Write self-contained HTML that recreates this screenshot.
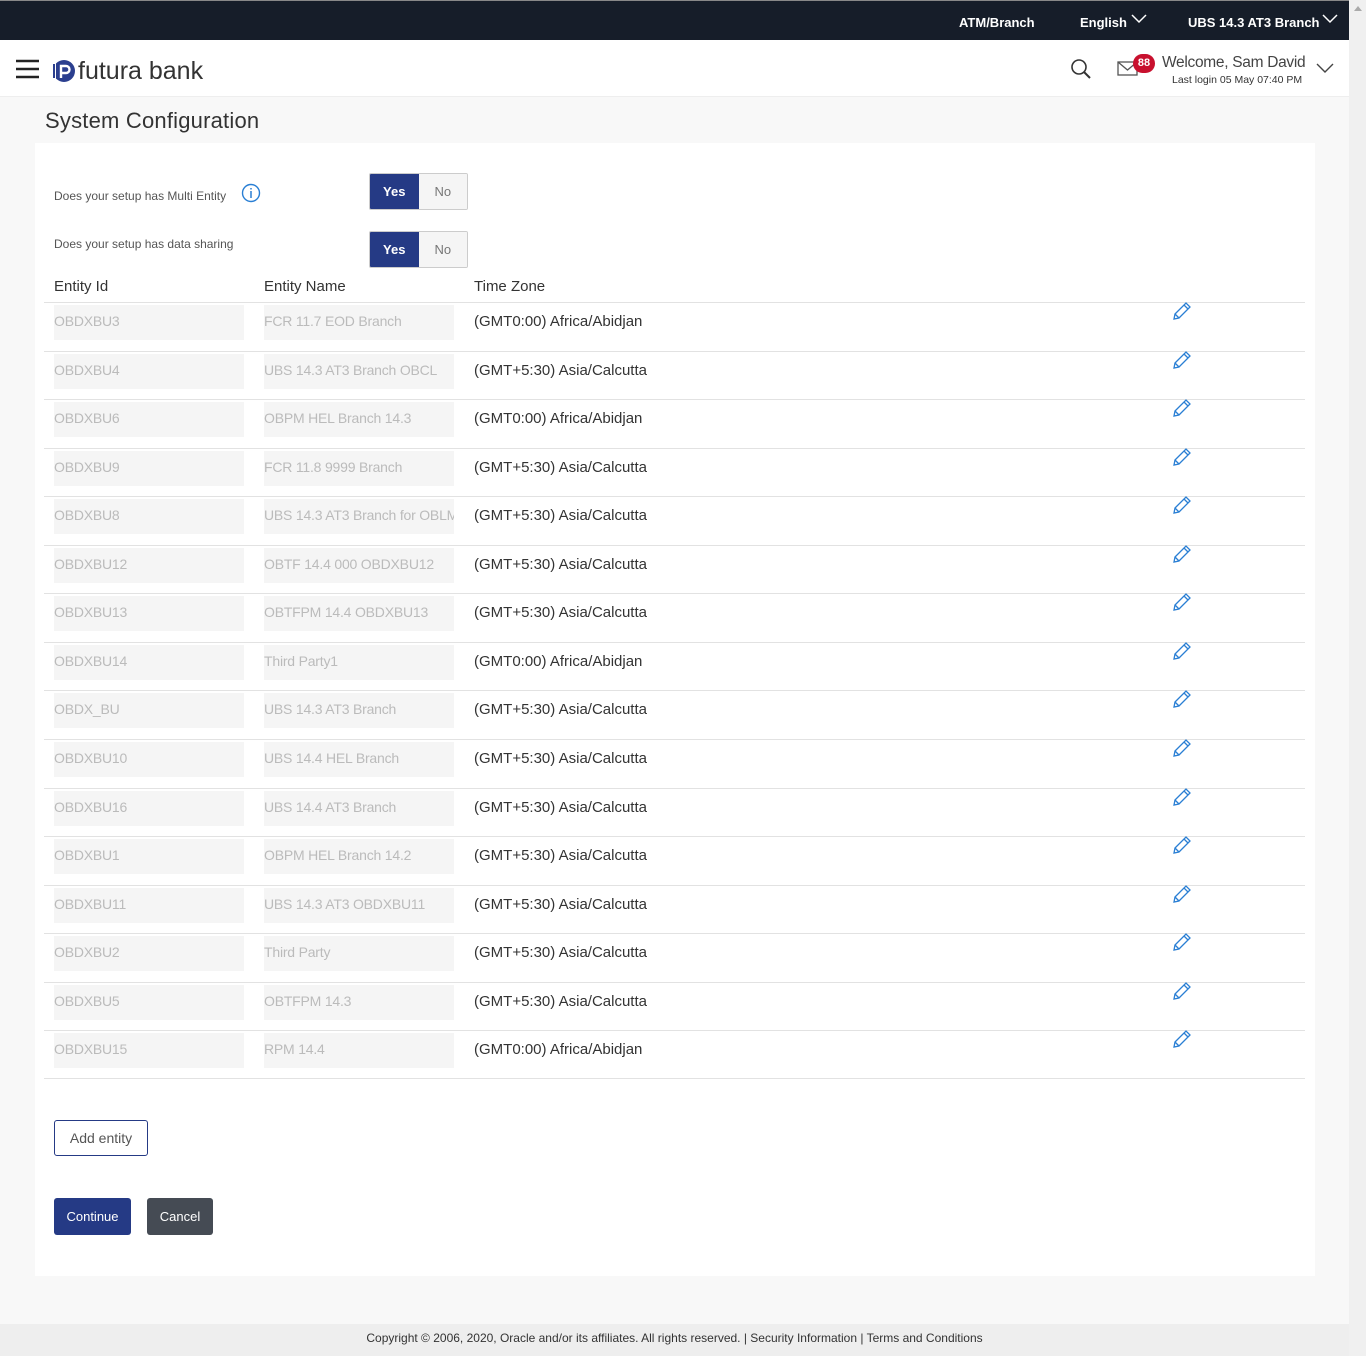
<!DOCTYPE html>
<html><head><meta charset="utf-8"><style>
*{box-sizing:border-box;margin:0;padding:0}
body{width:1366px;height:1356px;overflow:hidden;font-family:"Liberation Sans",sans-serif;background:#f8f8f8;position:relative;color:#333}
.top{position:absolute;left:0;top:0;width:1349px;height:40px;background:#161d29;border-top:1px solid #888;color:#fff;font-size:13px;font-weight:bold}
.top span{position:absolute;top:14px}
.hdr{position:absolute;left:0;top:40px;width:1349px;height:57px;background:#fff;border-bottom:1px solid #eee}
.sb{position:absolute;left:1349px;top:0;width:17px;height:1356px;background:#f0f0f0}
.title{position:absolute;left:45px;top:108px;font-size:22px;color:#333;letter-spacing:0.2px}
.card{position:absolute;left:35px;top:143px;width:1280px;height:1133px;background:#fff}
.q{position:absolute;left:54px;font-size:12px;color:#555}
.tg{position:absolute;left:369px;width:99px;height:37px;display:flex;border:1px solid #ccc;border-radius:2px;overflow:hidden;font-size:13px}
.tg div{flex:1;display:flex;align-items:center;justify-content:center}
.tg .y{background:#253a85;color:#fff;font-weight:bold}
.tg .n{background:#f5f5f5;color:#777}
.th{position:absolute;top:278px;font-size:15px;color:#333}
.row{position:absolute;left:44px;width:1261px;height:49px;border-top:1px solid #e2e2e2}
.row .b{position:absolute;top:2px;height:35px;width:190px;background:#f5f5f5;color:#bbb;font-size:14px;padding:8px 0 0 0;white-space:nowrap;overflow:hidden;letter-spacing:-0.2px}
.row .tz{position:absolute;left:430px;top:10px;font-size:15px;color:#333}
.row svg{position:absolute;left:1128px;top:-2px}
.btn{position:absolute;border-radius:3px;font-size:13px;display:flex;align-items:center;justify-content:center}
.foot{position:absolute;left:0;top:1324px;width:1349px;height:32px;background:#eee;font-size:12px;color:#333;text-align:center;padding-top:7px}
</style></head><body>
<div class="top"><span style="left:959px">ATM/Branch</span><span style="left:1080px">English</span><span style="left:1188px">UBS 14.3 AT3 Branch</span>
<svg style="position:absolute;left:1131px;top:13px" width="16" height="10"><path d="M1 1l7 7 7-7" stroke="#fff" stroke-width="1.5" fill="none"/></svg>
<svg style="position:absolute;left:1322px;top:13px" width="16" height="10"><path d="M1 1l7 7 7-7" stroke="#fff" stroke-width="1.5" fill="none"/></svg></div>
<div class="hdr">
<svg style="position:absolute;left:16px;top:19px" width="23" height="20"><path d="M0 2h23M0 10h23M0 18h23" stroke="#222" stroke-width="2.5"/></svg>
<svg style="position:absolute;left:50px;top:18px" width="26" height="26"><circle cx="14" cy="13" r="11" fill="#2b3f8f"/><rect x="2" y="5" width="4" height="16" fill="#fff"/><rect x="3" y="6" width="2" height="14" fill="#2b3f8f"/><path d="M11 20V8h5a3.5 3.5 0 010 7h-5" stroke="#fff" stroke-width="2.4" fill="none"/></svg>
<div style="position:absolute;left:78px;top:17px;font-size:25px;color:#333">futura bank</div>
<svg style="position:absolute;left:1070px;top:18px" width="22" height="22"><circle cx="9" cy="9" r="7" stroke="#333" stroke-width="1.6" fill="none"/><path d="M14 14l6 6" stroke="#333" stroke-width="2"/></svg>
<svg style="position:absolute;left:1117px;top:21px" width="22" height="16"><rect x="1" y="1" width="19" height="13" stroke="#555" fill="none" stroke-width="1.3"/><path d="M1 1l9.5 8 9.5-8" stroke="#555" fill="none" stroke-width="1.3"/></svg>
<div style="position:absolute;left:1133px;top:14px;width:22px;height:19px;border-radius:10px;background:#c8102e;color:#fff;font-size:11px;font-weight:bold;text-align:center;line-height:19px">88</div>
<div style="position:absolute;left:1162px;top:14px;font-size:15.5px;color:#444;letter-spacing:-0.3px">Welcome, Sam David</div>
<div style="position:absolute;left:1172px;top:34px;font-size:10.5px;color:#333">Last login 05 May 07:40 PM</div>
<svg style="position:absolute;left:1316px;top:23px" width="18" height="11"><path d="M1 1l8 8 8-8" stroke="#444" stroke-width="1.4" fill="none"/></svg>
</div>
<div class="sb"><div style="position:absolute;left:5px;top:6px;border:4px solid transparent;border-bottom:5px solid #aaa;border-top:0"></div></div>
<div class="title">System Configuration</div>
<div class="card"></div>
<div class="q" style="top:189px">Does your setup has Multi Entity</div>
<svg style="position:absolute;left:241px;top:183px" width="20" height="20"><circle cx="10" cy="10" r="8.5" stroke="#2a7fd4" stroke-width="1.4" fill="none"/><path d="M10 8v7M10 5v1.5" stroke="#2a7fd4" stroke-width="1.5"/></svg>
<div class="tg" style="top:173px"><div class="y">Yes</div><div class="n">No</div></div>
<div class="q" style="top:237px">Does your setup has data sharing</div>
<div class="tg" style="top:231px"><div class="y">Yes</div><div class="n">No</div></div>
<div class="th" style="left:54px">Entity Id</div><div class="th" style="left:264px">Entity Name</div><div class="th" style="left:474px">Time Zone</div>

<div class="row" style="top:302px"><div class="b" style="left:10px">OBDXBU3</div><div class="b" style="left:220px">FCR 11.7 EOD Branch</div><div class="tz">(GMT0:00) Africa/Abidjan</div><svg width="22" height="20"><path d="M2 18l1-5L14 2l4 4L7 17zM12 4l4 4M3 13l4 4" stroke="#2a7fd4" stroke-width="1.3" fill="none"/></svg></div>
<div class="row" style="top:350.5px"><div class="b" style="left:10px">OBDXBU4</div><div class="b" style="left:220px">UBS 14.3 AT3 Branch OBCL</div><div class="tz">(GMT+5:30) Asia/Calcutta</div><svg width="22" height="20"><path d="M2 18l1-5L14 2l4 4L7 17zM12 4l4 4M3 13l4 4" stroke="#2a7fd4" stroke-width="1.3" fill="none"/></svg></div>
<div class="row" style="top:399px"><div class="b" style="left:10px">OBDXBU6</div><div class="b" style="left:220px">OBPM HEL Branch 14.3</div><div class="tz">(GMT0:00) Africa/Abidjan</div><svg width="22" height="20"><path d="M2 18l1-5L14 2l4 4L7 17zM12 4l4 4M3 13l4 4" stroke="#2a7fd4" stroke-width="1.3" fill="none"/></svg></div>
<div class="row" style="top:448px"><div class="b" style="left:10px">OBDXBU9</div><div class="b" style="left:220px">FCR 11.8 9999 Branch</div><div class="tz">(GMT+5:30) Asia/Calcutta</div><svg width="22" height="20"><path d="M2 18l1-5L14 2l4 4L7 17zM12 4l4 4M3 13l4 4" stroke="#2a7fd4" stroke-width="1.3" fill="none"/></svg></div>
<div class="row" style="top:496px"><div class="b" style="left:10px">OBDXBU8</div><div class="b" style="left:220px">UBS 14.3 AT3 Branch for OBLM</div><div class="tz">(GMT+5:30) Asia/Calcutta</div><svg width="22" height="20"><path d="M2 18l1-5L14 2l4 4L7 17zM12 4l4 4M3 13l4 4" stroke="#2a7fd4" stroke-width="1.3" fill="none"/></svg></div>
<div class="row" style="top:545px"><div class="b" style="left:10px">OBDXBU12</div><div class="b" style="left:220px">OBTF 14.4 000 OBDXBU12</div><div class="tz">(GMT+5:30) Asia/Calcutta</div><svg width="22" height="20"><path d="M2 18l1-5L14 2l4 4L7 17zM12 4l4 4M3 13l4 4" stroke="#2a7fd4" stroke-width="1.3" fill="none"/></svg></div>
<div class="row" style="top:593px"><div class="b" style="left:10px">OBDXBU13</div><div class="b" style="left:220px">OBTFPM 14.4 OBDXBU13</div><div class="tz">(GMT+5:30) Asia/Calcutta</div><svg width="22" height="20"><path d="M2 18l1-5L14 2l4 4L7 17zM12 4l4 4M3 13l4 4" stroke="#2a7fd4" stroke-width="1.3" fill="none"/></svg></div>
<div class="row" style="top:642px"><div class="b" style="left:10px">OBDXBU14</div><div class="b" style="left:220px">Third Party1</div><div class="tz">(GMT0:00) Africa/Abidjan</div><svg width="22" height="20"><path d="M2 18l1-5L14 2l4 4L7 17zM12 4l4 4M3 13l4 4" stroke="#2a7fd4" stroke-width="1.3" fill="none"/></svg></div>
<div class="row" style="top:690px"><div class="b" style="left:10px">OBDX_BU</div><div class="b" style="left:220px">UBS 14.3 AT3 Branch</div><div class="tz">(GMT+5:30) Asia/Calcutta</div><svg width="22" height="20"><path d="M2 18l1-5L14 2l4 4L7 17zM12 4l4 4M3 13l4 4" stroke="#2a7fd4" stroke-width="1.3" fill="none"/></svg></div>
<div class="row" style="top:739px"><div class="b" style="left:10px">OBDXBU10</div><div class="b" style="left:220px">UBS 14.4 HEL Branch</div><div class="tz">(GMT+5:30) Asia/Calcutta</div><svg width="22" height="20"><path d="M2 18l1-5L14 2l4 4L7 17zM12 4l4 4M3 13l4 4" stroke="#2a7fd4" stroke-width="1.3" fill="none"/></svg></div>
<div class="row" style="top:788px"><div class="b" style="left:10px">OBDXBU16</div><div class="b" style="left:220px">UBS 14.4 AT3 Branch</div><div class="tz">(GMT+5:30) Asia/Calcutta</div><svg width="22" height="20"><path d="M2 18l1-5L14 2l4 4L7 17zM12 4l4 4M3 13l4 4" stroke="#2a7fd4" stroke-width="1.3" fill="none"/></svg></div>
<div class="row" style="top:836px"><div class="b" style="left:10px">OBDXBU1</div><div class="b" style="left:220px">OBPM HEL Branch 14.2</div><div class="tz">(GMT+5:30) Asia/Calcutta</div><svg width="22" height="20"><path d="M2 18l1-5L14 2l4 4L7 17zM12 4l4 4M3 13l4 4" stroke="#2a7fd4" stroke-width="1.3" fill="none"/></svg></div>
<div class="row" style="top:885px"><div class="b" style="left:10px">OBDXBU11</div><div class="b" style="left:220px">UBS 14.3 AT3 OBDXBU11</div><div class="tz">(GMT+5:30) Asia/Calcutta</div><svg width="22" height="20"><path d="M2 18l1-5L14 2l4 4L7 17zM12 4l4 4M3 13l4 4" stroke="#2a7fd4" stroke-width="1.3" fill="none"/></svg></div>
<div class="row" style="top:933px"><div class="b" style="left:10px">OBDXBU2</div><div class="b" style="left:220px">Third Party</div><div class="tz">(GMT+5:30) Asia/Calcutta</div><svg width="22" height="20"><path d="M2 18l1-5L14 2l4 4L7 17zM12 4l4 4M3 13l4 4" stroke="#2a7fd4" stroke-width="1.3" fill="none"/></svg></div>
<div class="row" style="top:982px"><div class="b" style="left:10px">OBDXBU5</div><div class="b" style="left:220px">OBTFPM 14.3</div><div class="tz">(GMT+5:30) Asia/Calcutta</div><svg width="22" height="20"><path d="M2 18l1-5L14 2l4 4L7 17zM12 4l4 4M3 13l4 4" stroke="#2a7fd4" stroke-width="1.3" fill="none"/></svg></div>
<div class="row" style="top:1030px;border-bottom:1px solid #e2e2e2"><div class="b" style="left:10px">OBDXBU15</div><div class="b" style="left:220px">RPM 14.4</div><div class="tz">(GMT0:00) Africa/Abidjan</div><svg width="22" height="20"><path d="M2 18l1-5L14 2l4 4L7 17zM12 4l4 4M3 13l4 4" stroke="#2a7fd4" stroke-width="1.3" fill="none"/></svg></div>

<div class="btn" style="left:54px;top:1120px;width:94px;height:36px;border:1px solid #253a85;color:#555;font-size:14px;background:#fff">Add entity</div>
<div class="btn" style="left:54px;top:1198px;width:77px;height:37px;background:#253a85;color:#fff">Continue</div>
<div class="btn" style="left:147px;top:1198px;width:66px;height:37px;background:#454b54;color:#fff">Cancel</div>
<div class="foot">Copyright © 2006, 2020, Oracle and/or its affiliates. All rights reserved. | Security Information | Terms and Conditions</div>
</body></html>
